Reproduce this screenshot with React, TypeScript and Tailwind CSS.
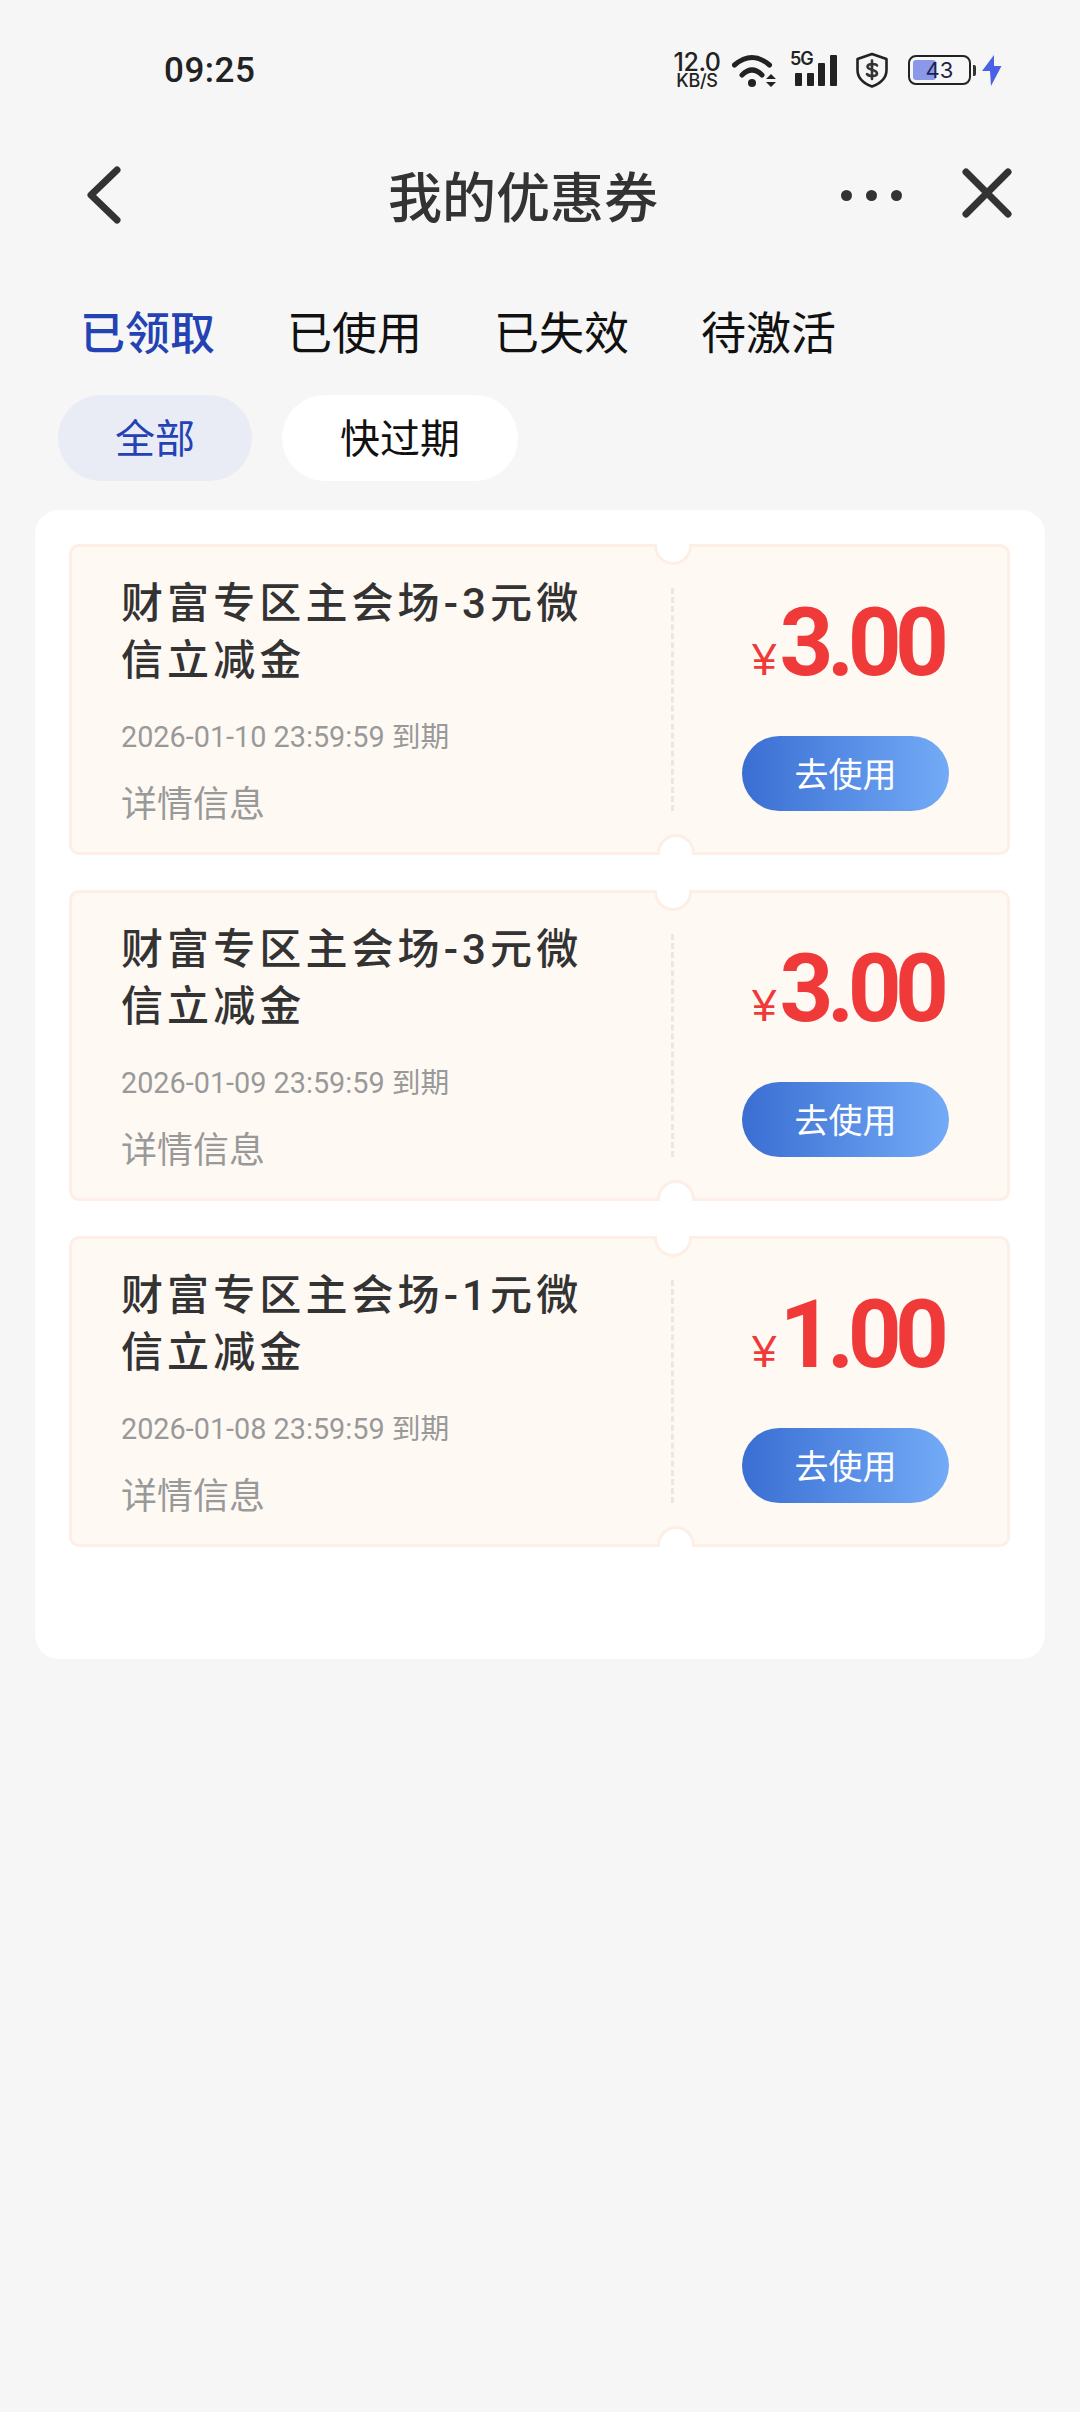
const cjk = "font-['Noto_Sans_CJK_SC','Noto_Sans',sans-serif]";

const coupons = [
  { title: "财富专区主会场-3元微信立减金", date: "2026-01-10 23:59:59 到期", price: "3.00" },
  { title: "财富专区主会场-3元微信立减金", date: "2026-01-09 23:59:59 到期", price: "3.00" },
  { title: "财富专区主会场-1元微信立减金", date: "2026-01-08 23:59:59 到期", price: "1.00" },
];

function StatusBar() {
  return (
    <div className="flex h-[86px] items-center pt-[54px] pl-[164px] pr-[78px]">
      <span className="font-['Roboto',sans-serif] text-[35px] leading-none font-medium text-[#222] tracking-[0.5px]">09:25</span>
      <div className="ml-auto flex items-center">
        <div className="flex w-[46px] translate-x-[1px] flex-col items-center font-['Inter',sans-serif] font-medium text-[#222]">
          <span className="text-[25px] leading-[20px] tracking-[-0.5px]">12.0</span>
          <span className="text-[18px] leading-[17px] tracking-[-0.3px]">KB/S</span>
        </div>
        <svg className="ml-[13px]" width="45" height="37" viewBox="0 0 45 37" fill="none">
          <path d="M2.5 13 Q20 -2 37.5 13" stroke="#222" strokeWidth="5" strokeLinecap="round" />
          <path d="M10 23 Q20 13 30 23" stroke="#222" strokeWidth="5" strokeLinecap="round" />
          <circle cx="20" cy="31" r="4" fill="#222" />
          <path d="M34 27 L39 22 L44 27 Z M34 30 H44 L39 35 Z" fill="#222" />
        </svg>
        <div className="relative ml-[13px] h-[36px] w-[48px]">
          <span className="absolute left-0 top-[-2px] font-['Inter',sans-serif] text-[18px] leading-[18px] font-semibold tracking-[-1px] text-[#222]">5G</span>
          <svg className="absolute left-0 top-0" width="48" height="36" viewBox="0 0 48 36" fill="#222">
            <rect x="5" y="21" width="7" height="13" rx="1" />
            <rect x="17" y="21" width="7" height="13" rx="1" />
            <rect x="28" y="11" width="7" height="23" rx="1" />
            <rect x="40" y="3" width="7" height="31" rx="1" />
          </svg>
        </div>
        <svg className="ml-[17px]" width="34" height="36" viewBox="0 0 34 36" fill="none">
          <path d="M17 2 L31.5 7 V18 C31.5 26 25 31.5 17 34.5 C9 31.5 2.5 26 2.5 18 V7 Z" stroke="#222" strokeWidth="2.6" strokeLinejoin="round" />
          <path d="M22 13.5 C21 11.5 13 11 12.5 14.5 C12 18.5 22 17 22 21.5 C22 25 13.5 24.5 12 22 M17 8.5 V27" stroke="#333" strokeWidth="2.6" strokeLinecap="round" />
        </svg>
        <div className="relative ml-[19px] flex h-[30px] w-[63px] items-center justify-center overflow-hidden rounded-[8px] border-[2.5px] border-[#222]">
          <div className="absolute left-[3px] top-[3px] bottom-[3px] w-[23px] rounded-[3px] bg-[#8b98ea]" />
          <span className="relative font-['Inter',sans-serif] text-[22px] leading-none text-[#1d2350]">43</span>
        </div>
        <div className="ml-[2px] h-[11px] w-[3px] rounded-r-[2px] bg-[#333]" />
        <svg className="ml-[6px]" width="20" height="31" viewBox="0 0 20 31" fill="#4a61e6">
          <path d="M12 0 L0 16 H8 L9 31 L19.5 11 H12 Z" />
        </svg>
      </div>
    </div>
  );
}

function NavBar() {
  return (
    <div className="mt-[73px] flex h-[72px] items-center text-[#333]">
      <svg className="ml-[84px]" width="40" height="60" viewBox="0 0 40 60" fill="none">
        <path d="M33 5 L7 30 L33 55" stroke="#333" strokeWidth="7" strokeLinecap="round" strokeLinejoin="round" />
      </svg>
      <h1 className={`ml-[264px] text-[54px] leading-none font-medium text-[#333] ${cjk}`}>我的优惠券</h1>
      <div className="ml-[183px] flex items-center gap-[14px]">
        <span className="h-[11px] w-[11px] rounded-full bg-[#333]" />
        <span className="h-[11px] w-[11px] rounded-full bg-[#333]" />
        <span className="h-[11px] w-[11px] rounded-full bg-[#333]" />
      </div>
      <svg className="ml-[60px] mt-[-4px]" width="50" height="50" viewBox="0 0 50 50" fill="none">
        <path d="M4 4 L46 46 M46 4 L4 46" stroke="#333" strokeWidth="7" strokeLinecap="round" />
      </svg>
    </div>
  );
}

function Tabs() {
  const tabs = ["已领取", "已使用", "已失效", "待激活"];
  return (
    <div className={`mt-[70px] flex gap-[72px] pl-[80px] text-[45px] leading-[60px] ${cjk}`}>
      {tabs.map((t, i) => (
        <span key={t} className={i === 0 ? "font-medium text-[#2342b4]" : "text-[#111]"}>{t}</span>
      ))}
    </div>
  );
}

function Pills() {
  return (
    <div className={`mt-[34px] flex gap-[30px] pl-[58px] text-[40px] ${cjk}`}>
      <span className="flex h-[86px] w-[194px] items-center justify-center rounded-[43px] bg-[#e9ebf5] pb-[4px] text-[#2342b4]">全部</span>
      <span className="flex h-[86px] w-[236px] items-center justify-center rounded-[43px] bg-white pb-[4px] text-[#111]">快过期</span>
    </div>
  );
}

function Coupon({ title, date, price }: { title: string; date: string; price: string }) {
  return (
    <div className="relative flex h-[311px] rounded-[10px] border-[3px] border-[#fdeee6] bg-[#fff9f4]">
      <div className="absolute left-[582px] top-[-3px] h-[21px] w-[38px] rounded-b-full border-x-[3px] border-b-[3px] border-[#fdeee6] bg-white" />
      <div className="absolute left-[585px] bottom-[-3px] h-[21px] w-[38px] rounded-t-full border-x-[3px] border-t-[3px] border-[#fdeee6] bg-white" />
      <div className="flex w-[599px] flex-col pl-[49px] pt-[28px]">
        <p className="w-[480px] font-['Roboto','Noto_Sans_CJK_SC',sans-serif] text-[42px] leading-[57px] font-medium tracking-[4.1px] text-[#333]">{title}</p>
        <p className="mt-[29px] font-['Roboto','Noto_Sans_CJK_SC',sans-serif] text-[28.8px] leading-[38px] text-[#999]">{date}</p>
        <p className={`mt-[22px] text-[36px] leading-[46px] text-[#999] ${cjk}`}>详情信息</p>
      </div>
      <div className="my-[41px] border-l-[3px] border-dashed border-[#efe6e0]" />
      <div className="flex flex-1 flex-col pl-[68px] pt-[55px]">
        <div className="flex h-[82px] items-baseline pl-[10px]">
          <span className="mr-[3px] font-['Liberation_Sans',sans-serif] text-[44px] leading-none text-[#f03a3a]">¥</span>
          <span className="font-['Roboto',sans-serif] text-[94px] leading-[82px] font-bold tracking-[-6.5px] text-[#f03a3a]">{price}</span>
        </div>
        <button className={`mt-[52px] flex h-[75px] w-[207px] items-center justify-center rounded-[38px] bg-gradient-to-r from-[#3a6ed2] to-[#74abf7] pb-[2px] text-[34px] text-white ${cjk}`}>去使用</button>
      </div>
    </div>
  );
}

export default function App() {
  return (
    <div className="min-h-[2412px] w-[1080px] overflow-hidden bg-[#f6f6f6]">
      <StatusBar />
      <NavBar />
      <Tabs />
      <Pills />
      <div className="mx-[35px] mt-[29px] h-[1149px] rounded-[24px] bg-white px-[34px] pt-[34px]">
        <div className="flex w-[941px] flex-col gap-[35px]">
          {coupons.map((c) => (
            <Coupon key={c.date} {...c} />
          ))}
        </div>
      </div>
    </div>
  );
}
